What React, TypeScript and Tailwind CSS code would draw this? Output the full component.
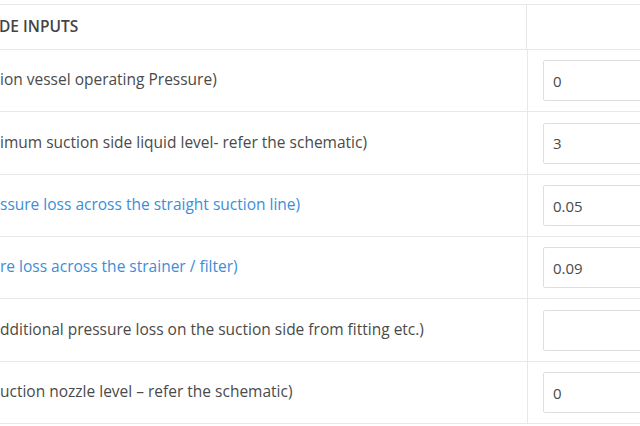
const rows: { label: string; value: string; link?: boolean }[] = [
  { label: "ion vessel operating Pressure)", value: "0" },
  { label: "imum suction side liquid level- refer the schematic)", value: "3" },
  { label: "ssure loss across the straight suction line)", value: "0.05", link: true },
  { label: "re loss across the strainer / filter)", value: "0.09", link: true },
  { label: "dditional pressure loss on the suction side from fitting etc.)", value: "" },
  { label: "uction nozzle level \u2013 refer the schematic)", value: "0" },
];

export default function App() {
  return (
    <div
      className="w-[640px] h-[426px] overflow-hidden bg-white pt-[4px] text-[15.5px] text-[#4a4a4a]"
      style={{ fontFamily: '"Open Sans", "Liberation Sans", sans-serif' }}
    >
      <div className="w-[760px] border-t border-[#e8e8e8]">
        {/* Section header */}
        <div className="flex h-[45px] border-b border-[#e8e8e8]">
          <div className="w-[527px] flex items-center font-semibold text-[#444] -ml-[1px]">
            DE INPUTS
          </div>
          <div className="flex-1 border-l border-[#e8e8e8]" />
        </div>

        {rows.map((r, i) => (
          <div
            key={i}
            className={`flex border-b border-[#e8e8e8] ${i % 3 === 1 ? "h-[63px]" : "h-[62px]"}`}
          >
            <div
              className={`w-[527px] flex items-center pb-[1px] ${r.link ? "text-[#3b8ed8]" : "text-[#4a4a4a]"}`}
            >
              {r.label}
            </div>
            <div className="flex-1 border-l border-[#e8e8e8] flex items-center pl-[15px]">
              <input
                readOnly
                value={r.value}
                className="w-[200px] h-[41px] border border-[#dedede] rounded-[2px] px-[9px] text-[15px] text-[#4a4a4a] outline-none bg-white"
                style={{ fontFamily: '"Open Sans", "Liberation Sans", sans-serif' }}
              />
            </div>
          </div>
        ))}
      </div>
    </div>
  );
}
